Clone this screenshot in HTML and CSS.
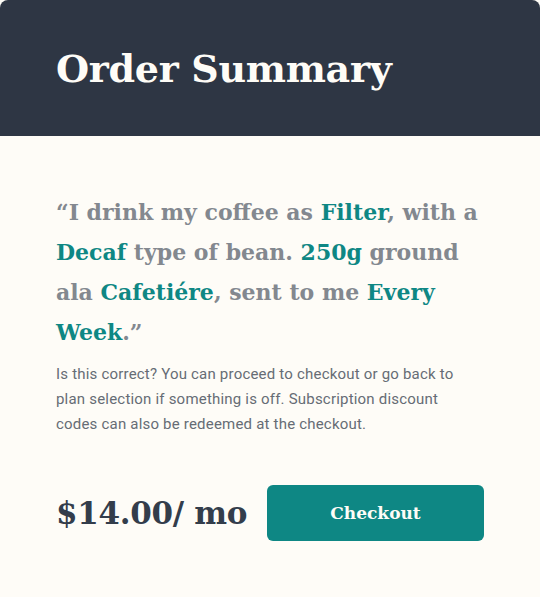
FILE: index.html
```html
<!DOCTYPE html>
<html lang="en">
<head>
<meta charset="utf-8">
<link rel="stylesheet" href="styles.css">
</head>
<body>
<div class="card">
  <header class="card-head">
    <h1 class="title">Order Summary</h1>
  </header>
  <section class="card-body">
    <p class="quote">“I drink my coffee as <span class="hl">Filter</span>, with a <span class="hl">Decaf</span> type of bean. <span class="hl">250g</span> ground ala <span class="hl">Cafetiére</span>, sent to me <span class="hl">Every Week</span>.”</p>
    <p class="desc">Is this correct? You can proceed to checkout or go back to plan selection if something is off. Subscription discount codes can also be redeemed at the checkout.</p>
    <div class="footer">
      <div class="price">$14.00/ mo</div>
      <button class="btn">Checkout</button>
    </div>
  </section>
</div>
</body>
</html>
```
FILE: styles.css
```css
* { box-sizing: border-box; }
html, body { margin: 0; padding: 0; background: #fefcf7; }
.card {
  width: 540px;
  height: 597px;
  border-radius: 8px 8px 0 0;
  overflow: hidden;
  background: #fefcf7;
}
.card-head {
  background: #2e3644;
  height: 136px;
  padding: 2px 56px 0;
  display: flex;
  align-items: center;
}
.title {
  margin: 0;
  color: #fefcf7;
  font-family: "DejaVu Serif", serif;
  font-weight: 700;
  font-size: 38px;
  line-height: 48px;
  letter-spacing: -0.3px;
}
.card-body {
  padding: 56px 56px 0;
}
.quote {
  margin: 0;
  font-family: "DejaVu Serif", serif;
  font-weight: 700;
  font-size: 22px;
  line-height: 40px;
  color: #83888f;
}
.hl { color: #0e8784; }
.desc {
  margin: 10px 0 0;
  max-width: 404px;
  font-family: "Roboto", sans-serif;
  font-size: 15px;
  line-height: 25px;
  letter-spacing: 0.2px;
  color: #666c75;
}
.footer {
  margin-top: 48px;
  display: flex;
  align-items: center;
  justify-content: space-between;
}
.price {
  font-family: "DejaVu Serif", serif;
  font-weight: 700;
  font-size: 31px;
  color: #333d4b;
  letter-spacing: -0.3px;
}
.btn {
  width: 217px;
  height: 56px;
  border: 0;
  border-radius: 6px;
  background: #0e8784;
  color: #fefcf7;
  font-family: "DejaVu Serif", serif;
  font-weight: 700;
  font-size: 17px;
}
```
